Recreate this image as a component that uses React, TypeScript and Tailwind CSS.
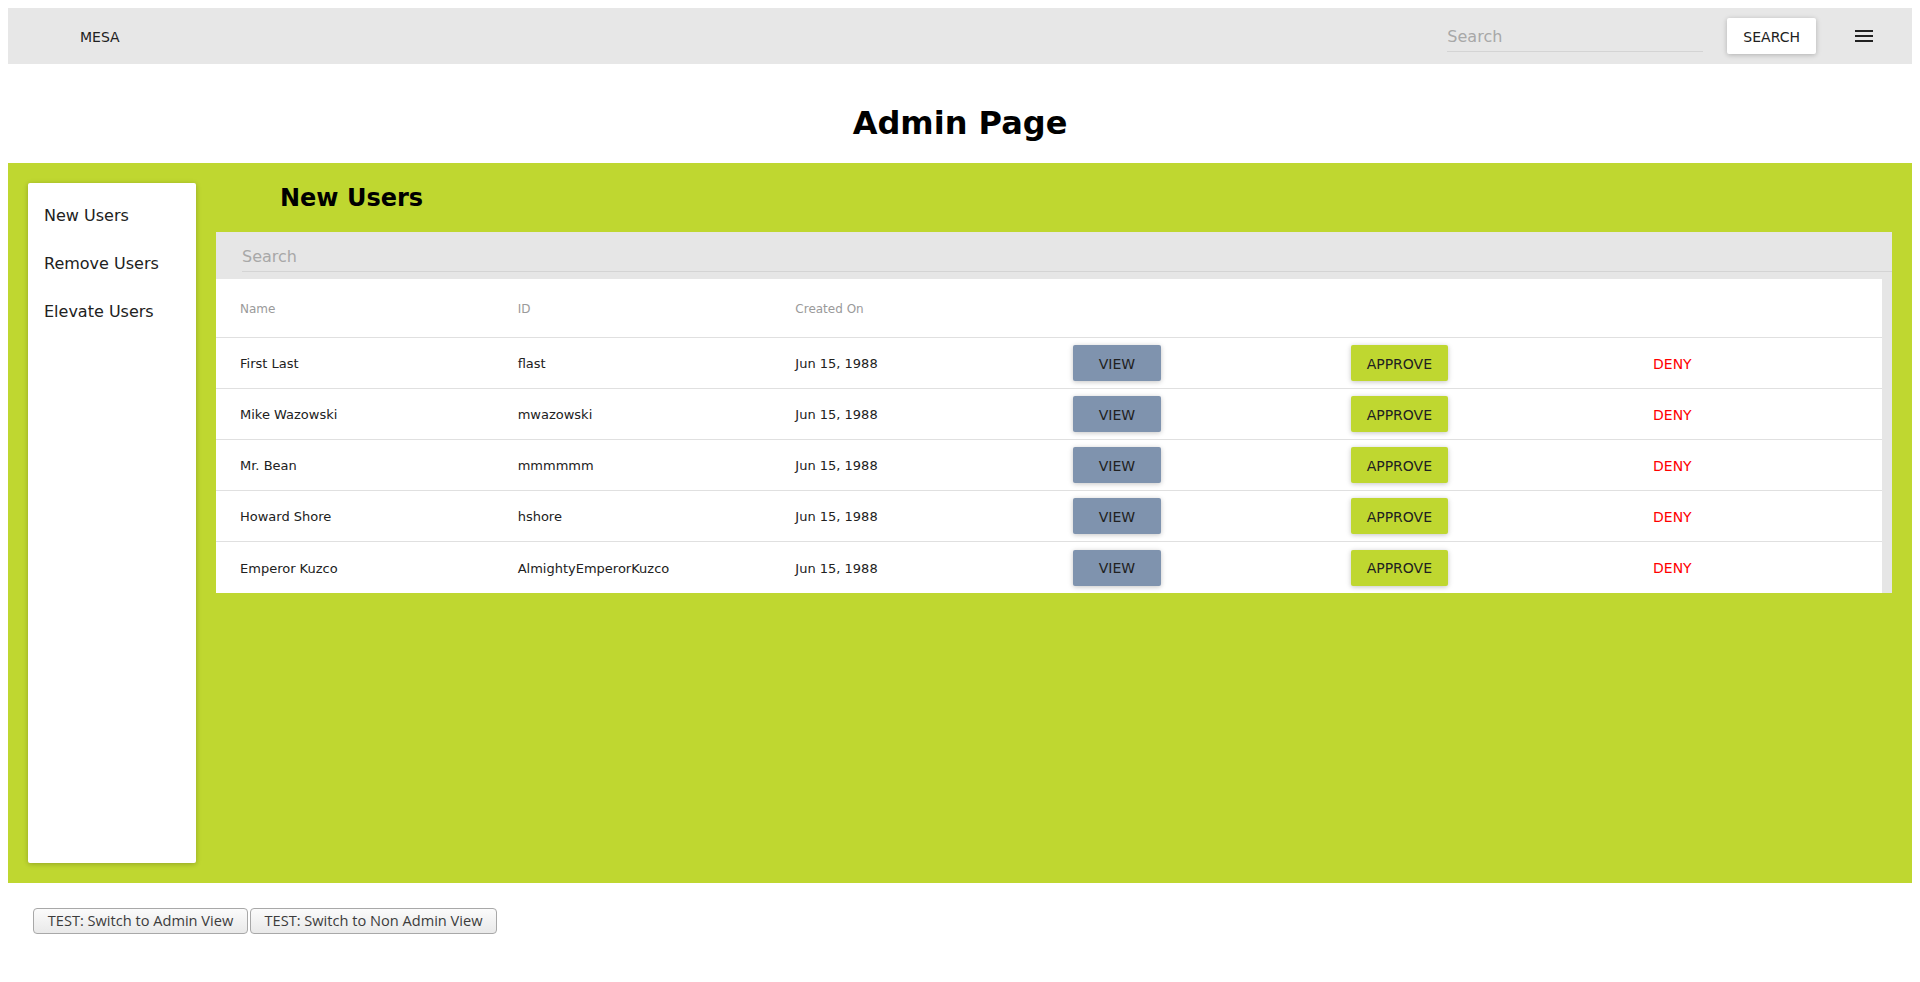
import React from "react";

const rows = [
  { name: "First Last", id: "flast" },
  { name: "Mike Wazowski", id: "mwazowski" },
  { name: "Mr. Bean", id: "mmmmmm" },
  { name: "Howard Shore", id: "hshore" },
  { name: "Emperor Kuzco", id: "AlmightyEmperorKuzco" },
];

const raised =
  "shadow-[0_1px_6px_rgba(0,0,0,0.12),0_1px_4px_rgba(0,0,0,0.12)]";

export default function App() {
  return (
    <div className="min-h-[982px] bg-white p-2 font-['DejaVu_Sans',sans-serif] text-[#212121]">
      {/* Header */}
      <header className="flex h-14 items-center bg-[#e7e7e7] pl-[72px] pr-6">
        <span className="pt-[2px] text-[14px] text-[#212121]">MESA</span>
        <div className="flex-1" />
        <div className="h-8 w-[256px] border-b border-[#d4d4d4]">
          <input
            placeholder="Search"
            className="h-[31px] w-full bg-transparent pt-[2px] text-[16px] text-[#212121] outline-none placeholder:text-[#a8a8a8]"
          />
        </div>
        <button
          className={`ml-6 h-9 min-w-[88px] rounded-[2px] bg-white px-4 pt-[2px] text-[14px] text-[#212121] ${raised}`}
        >
          SEARCH
        </button>
        <button className="ml-6 flex h-12 w-12 items-center justify-center">
          <svg width="18" height="12" viewBox="0 0 18 12">
            <rect x="0" y="0" width="18" height="2" fill="#212121" />
            <rect x="0" y="5" width="18" height="2" fill="#212121" />
            <rect x="0" y="10" width="18" height="2" fill="#212121" />
          </svg>
        </button>
      </header>

      {/* Title */}
      <div className="h-[99px] pt-[41px] text-center">
        <h1 className="text-[32px] font-bold leading-[37px] text-black">
          Admin Page
        </h1>
      </div>

      {/* Green section */}
      <section className="flex h-[720px] gap-5 bg-[#bfd730] p-5">
        <nav
          className={`w-[168px] shrink-0 rounded-[2px] bg-white pt-[9px] pb-2 ${raised}`}
        >
          {["New Users", "Remove Users", "Elevate Users"].map((t) => (
            <div
              key={t}
              className="flex h-12 items-center px-4 text-[16px] text-[#212121]"
            >
              {t}
            </div>
          ))}
        </nav>

        <div className="flex flex-1 flex-col">
          <h2 className="h-[49px] pl-[64px] pt-[1px] text-[24px] font-bold leading-[28px] text-black">
            New Users
          </h2>
          <div className="bg-[#e6e6e6]">
            <div className="h-[47px] pt-2 pl-[26px]">
              <div className="h-8 border-b border-[#d4d4d4]">
                <input
                  placeholder="Search"
                  className="h-[31px] w-full bg-transparent pt-[2px] text-[16px] text-[#212121] outline-none placeholder:text-[#a8a8a8]"
                />
              </div>
            </div>
            <div className="mr-[10px] bg-white">
              <div className="grid h-[59px] grid-cols-6 items-center border-b border-[#e0e0e0] pt-[2px] text-[12px] text-[#9a9a9a]">
                <div className="pl-6">Name</div>
                <div className="pl-6">ID</div>
                <div className="pl-6">Created On</div>
                <div />
                <div />
                <div />
              </div>
              {rows.map((r, i) => (
                <div
                  key={r.id}
                  className={`grid h-[51px] grid-cols-6 items-center text-[13px] text-[#212121] ${
                    i < rows.length - 1 ? "border-b border-[#e0e0e0]" : ""
                  }`}
                >
                  <div className="pl-6 pt-[2px]">{r.name}</div>
                  <div className="pl-6 pt-[2px]">{r.id}</div>
                  <div className="pl-6 pt-[2px]">Jun 15, 1988</div>
                  <div className="pl-6">
                    <button
                      className={`h-9 min-w-[88px] rounded-[2px] bg-[#7f93ae] px-4 pt-[2px] text-[14px] text-[#212121] ${raised}`}
                    >
                      VIEW
                    </button>
                  </div>
                  <div className="pl-6">
                    <button
                      className={`h-9 min-w-[88px] rounded-[2px] bg-[#bfd730] px-4 pt-[2px] text-[14px] text-[#212121] ${raised}`}
                    >
                      APPROVE
                    </button>
                  </div>
                  <div className="pl-6">
                    <button className="h-9 min-w-[88px] rounded-[2px] px-2 pt-[2px] text-[14px] text-[#ff0000]">
                      DENY
                    </button>
                  </div>
                </div>
              ))}
            </div>
          </div>
        </div>
      </section>

      {/* Test buttons */}
      <div className="ml-[25px] mt-[25px] flex gap-[2px] font-['Open_Sans',sans-serif]">
        <button className="h-[26px] w-[215px] rounded-[4px] border border-[#a8a8a8] bg-gradient-to-b from-[#fbfbfb] to-[#e9e9e9] text-[14.6px] text-[#3c3c3c]">
          TEST: Switch to Admin View
        </button>
        <button className="h-[26px] w-[247px] rounded-[4px] border border-[#a8a8a8] bg-gradient-to-b from-[#fbfbfb] to-[#e9e9e9] text-[14.6px] text-[#3c3c3c]">
          TEST: Switch to Non Admin View
        </button>
      </div>
    </div>
  );
}
